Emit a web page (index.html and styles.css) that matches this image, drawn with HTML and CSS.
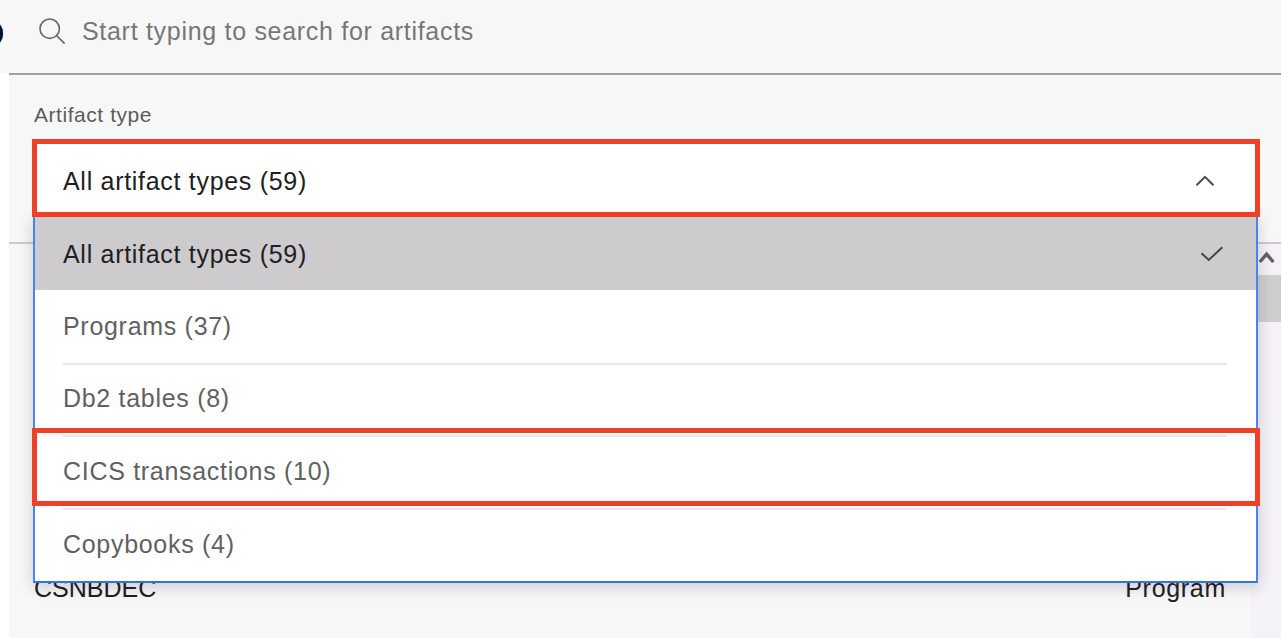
FILE: index.html
```html
<!DOCTYPE html>
<html lang="en">
<head>
<meta charset="utf-8">
<title>Artifacts</title>
<link rel="stylesheet" href="styles.css">
</head>
<body>
<div class="app">
  <header class="search">
    <span class="edge-badge"></span>
    <svg class="search-icon" width="27" height="27" viewBox="0 0 27 27" fill="none" stroke="#666" stroke-width="1.6"><circle cx="10.7" cy="10.7" r="9.7"/><path d="M17.6 17.6 25.6 25.6"/></svg>
    <span class="placeholder">Start typing to search for artifacts</span>
  </header>
  <main class="panel">
    <section class="filter">
      <div class="label">Artifact type</div>
      <div class="dropdown">
        <div class="field">
          <span>All artifact types (59)</span>
          <svg class="chevron" width="20" height="12" viewBox="0 0 20 12" fill="none" stroke="#4a4a4a" stroke-width="2"><path d="M1.5 10.2 10 1.8 18.5 10.2"/></svg>
        </div>
        <ul class="menu">
          <li class="option selected"><span>All artifact types (59)</span><svg class="check" width="24" height="16" viewBox="0 0 24 16" fill="none" stroke="#444" stroke-width="2"><path d="M1.5 7.3 8.8 14 22.3 1.2"/></svg></li>
          <li class="option"><span>Programs (37)</span></li>
          <li class="option"><span>Db2 tables (8)</span></li>
          <li class="option"><span>CICS transactions (10)</span></li>
          <li class="option"><span>Copybooks (4)</span></li>
        </ul>
        <div class="callout callout-field"></div>
        <div class="callout callout-option"></div>
      </div>
    </section>
    <section class="results">
      <div class="row"><span class="name">CSNBDEC</span><span>Program</span></div>
      <div class="scrollbar">
        <svg class="arrow" width="18" height="13" viewBox="0 0 18 13" fill="none" stroke="#626262" stroke-width="3.4"><path d="M1.8 11 8.6 3.2 15.4 11"/></svg>
        <div class="thumb"></div>
      </div>
    </section>
  </main>
</div>
</body>
</html>
```
FILE: styles.css
```css
* { box-sizing: border-box; }

body {
  margin: 0;
  background: #fff;
  color: #202020;
  font: 25px/28px "Liberation Sans", Arial, sans-serif;
  letter-spacing: 0.7px;
}

.app {
  position: relative;
  display: flex;
  flex-direction: column;
  width: 1282px;
  height: 638px;
  overflow: hidden;
}

.search {
  display: flex;
  height: 73px;
  margin-right: 1px;
  padding-left: 39px;
  background: #f7f7f7;
}

.edge-badge {
  position: absolute;
  left: -21px;
  top: 20px;
  width: 24px;
  height: 27px;
  border-radius: 50%;
  background: #081225;
  box-shadow: 0 0 1px #1673c9;
}

.search-icon { margin-top: 18px; }

.placeholder {
  margin: 17px 0 0 16px;
  color: #777;
}

.panel {
  display: flex;
  flex-direction: column;
  flex: 1;
  margin: 0 1px 0 9px;
  border-top: 2px solid #a0a0a0;
  background: #f7f7f7;
}

.filter {
  height: 169px;
  padding: 28px 22px 0 24px;
  border-bottom: 2px solid #cbcbcb;
}

.label {
  height: 37px;
  padding-left: 1px;
  color: #5c5c5c;
  font-size: 21px;
  line-height: 24px;
  letter-spacing: 0.55px;
}

.dropdown {
  position: relative;
  width: 1225px;
}

.field {
  display: flex;
  align-items: center;
  justify-content: space-between;
  height: 76px;
  padding: 6px 43px 0 30px;
  background: #fff;
}

.menu {
  position: absolute;
  z-index: 1;
  left: 0;
  top: 76px;
  width: 1225px;
  margin: 0;
  padding: 0;
  border: 2px solid #4c83ef;
  border-top-width: 1px;
  border-bottom-color: #3471e6;
  background: #fff;
  box-shadow: 0 4px 14px rgba(35, 25, 50, 0.2);
  list-style: none;
}

.option {
  display: flex;
  align-items: center;
  justify-content: space-between;
  height: 72.8px;
  margin: 0 29px 0 28px;
  padding-bottom: 4px;
  border-top: 2px solid #e8e8e8;
  color: #616161;
}

.option.selected {
  margin: 0;
  padding: 1px 32px 0 28px;
  border-top: 0;
  background: #cdcbce;
  color: #202020;
}

.option.selected + .option {
  padding-bottom: 3px;
  border-top-color: transparent;
}

.callout {
  position: absolute;
  z-index: 2;
  left: -1px;
  width: 1228px;
  height: 78px;
  border: 5px solid #ee4027;
}

.callout-field { top: -1px; }
.callout-option { top: 288px; }

.results {
  display: flex;
  flex: 1;
}

.row {
  display: flex;
  align-items: flex-end;
  justify-content: space-between;
  flex: 1;
  padding: 0 25px 36px 25px;
}

.name { letter-spacing: 0; }

.scrollbar {
  width: 30px;
  background: #f4f2f6;
}

.arrow {
  display: block;
  margin: 7px 0 0 7px;
}

.thumb {
  height: 47px;
  margin-top: 11px;
  background: #cecece;
}
```
